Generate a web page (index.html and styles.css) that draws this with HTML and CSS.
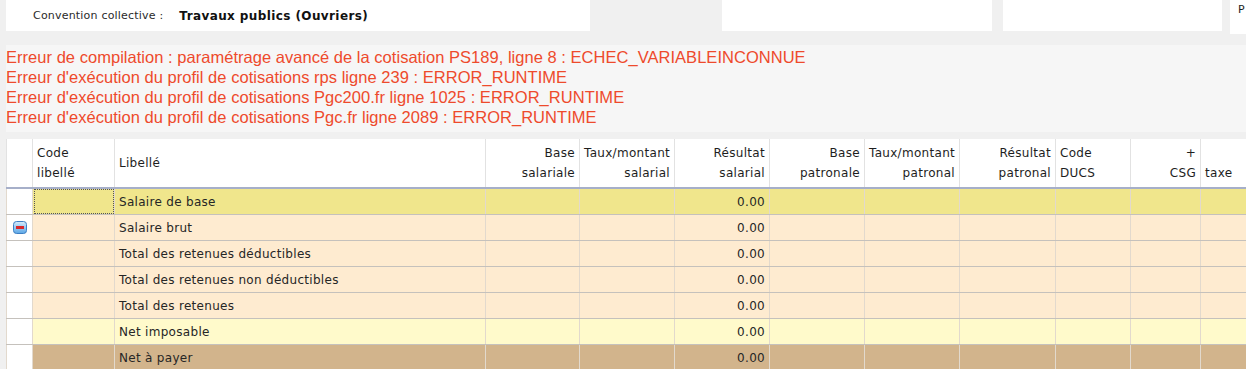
FILE: index.html
```html
<!DOCTYPE html>
<html lang="fr">
<head>
    <meta charset="UTF-8">
    <title>Bulletin - profil de cotisations</title>
    <link rel="stylesheet" href="styles.css">
</head>
<body>
    <div class="top-bar">
        <div class="top-box convention">
            <span class="conv-label">Convention collective :</span>
            <span class="conv-value">Travaux publics (Ouvriers)</span>
        </div>
        <div class="top-box box-mid"></div>
        <div class="top-box box-right"></div>
        <div class="top-box box-last">P</div>
    </div>

    <div class="errors">
        <div>Erreur de compilation : paramétrage avancé de la cotisation PS189, ligne 8 : ECHEC_VARIABLEINCONNUE</div>
        <div>Erreur d'exécution du profil de cotisations rps ligne 239 : ERROR_RUNTIME</div>
        <div>Erreur d'exécution du profil de cotisations Pgc200.fr ligne 1025 : ERROR_RUNTIME</div>
        <div>Erreur d'exécution du profil de cotisations Pgc.fr ligne 2089 : ERROR_RUNTIME</div>
    </div>

    <div class="grid-wrap">
        <table class="grid">
            <colgroup>
                <col style="width:26px">
                <col style="width:82px">
                <col style="width:371px">
                <col style="width:94px">
                <col style="width:95px">
                <col style="width:95px">
                <col style="width:95px">
                <col style="width:95px">
                <col style="width:96px">
                <col style="width:75px">
                <col style="width:70px">
                <col style="width:80px">
            </colgroup>
            <thead>
                <tr>
                    <th></th>
                    <th class="left">Code<br>libellé</th>
                    <th class="left">Libellé</th>
                    <th>Base<br>salariale</th>
                    <th>Taux/montant<br>salarial</th>
                    <th>Résultat<br>salarial</th>
                    <th>Base<br>patronale</th>
                    <th>Taux/montant<br>patronal</th>
                    <th>Résultat<br>patronal</th>
                    <th class="left">Code<br>DUCS</th>
                    <th>+<br>CSG</th>
                    <th class="left">&nbsp;<br>taxe</th>
                </tr>
            </thead>
            <tbody>
                <tr class="row-base">
                    <td class="ind"></td>
                    <td class="focus"></td>
                    <td>Salaire de base</td>
                    <td></td><td></td><td class="num">0.00</td>
                    <td></td><td></td><td></td><td></td><td></td><td></td>
                </tr>
                <tr class="row-total">
                    <td class="ind">
                        <svg class="collapse-icon" width="14" height="13" viewBox="0 0 14 13">
                            <defs>
                                <linearGradient id="blueGrad" x1="0" y1="0" x2="0" y2="1">
                                    <stop offset="0" stop-color="#d6ecfc"/>
                                    <stop offset="1" stop-color="#5aa6e6"/>
                                </linearGradient>
                            </defs>
                            <rect x="0.5" y="0.5" width="13" height="12" rx="3" fill="url(#blueGrad)" stroke="#3d7fc4"/>
                            <rect x="3" y="5" width="8" height="3" fill="#d7262b"/>
                        </svg>
                    </td>
                    <td></td>
                    <td>Salaire brut</td>
                    <td></td><td></td><td class="num">0.00</td>
                    <td></td><td></td><td></td><td></td><td></td><td></td>
                </tr>
                <tr class="row-total">
                    <td class="ind"></td>
                    <td></td>
                    <td>Total des retenues déductibles</td>
                    <td></td><td></td><td class="num">0.00</td>
                    <td></td><td></td><td></td><td></td><td></td><td></td>
                </tr>
                <tr class="row-total">
                    <td class="ind"></td>
                    <td></td>
                    <td>Total des retenues non déductibles</td>
                    <td></td><td></td><td class="num">0.00</td>
                    <td></td><td></td><td></td><td></td><td></td><td></td>
                </tr>
                <tr class="row-total">
                    <td class="ind"></td>
                    <td></td>
                    <td>Total des retenues</td>
                    <td></td><td></td><td class="num">0.00</td>
                    <td></td><td></td><td></td><td></td><td></td><td></td>
                </tr>
                <tr class="row-imposable">
                    <td class="ind"></td>
                    <td></td>
                    <td>Net imposable</td>
                    <td></td><td></td><td class="num">0.00</td>
                    <td></td><td></td><td></td><td></td><td></td><td></td>
                </tr>
                <tr class="row-net">
                    <td class="ind"></td>
                    <td></td>
                    <td>Net à payer</td>
                    <td></td><td></td><td class="num">0.00</td>
                    <td></td><td></td><td></td><td></td><td></td><td></td>
                </tr>
            </tbody>
        </table>
    </div>
</body>
</html>
```

FILE: styles.css
```css
body {
    margin: 0;
    background: #f0f0f0;
    font-family: "DejaVu Sans", Tahoma, sans-serif;
    font-size: 12px;
    letter-spacing: 0.3px;
    color: #1e1e1e;
    overflow: hidden;
}

.top-bar {
    display: flex;
    height: 31px;
}

.top-box {
    background: white;
    height: 31px;
}

.convention {
    margin-left: 6px;
    width: 584px;
    box-sizing: border-box;
    padding-left: 27px;
    display: flex;
    align-items: center;
}

.conv-label {
    font-size: 11px;
    letter-spacing: 0.2px;
    color: #2a2a2a;
}

.conv-value {
    font-weight: bold;
    margin-left: 16px;
    letter-spacing: 0.4px;
    color: #111;
}

.box-mid {
    margin-left: 132px;
    width: 270px;
}

.box-right {
    margin-left: 11px;
    width: 219px;
}

.box-last {
    margin-left: 8px;
    flex: 1;
    padding: 3px 0 0 8px;
    font-size: 11px;
}

.errors {
    margin: 14px 0 0 6px;
    padding: 2px 0 5px;
    background: #f6f6f6;
    font-family: "Liberation Sans", Arial, sans-serif;
    font-size: 16.5px;
    letter-spacing: 0.03px;
    line-height: 20px;
    color: #ee4a2c;
}

.grid-wrap {
    margin-top: 7px;
    margin-left: 6px;
}

.grid {
    table-layout: fixed;
    border-collapse: collapse;
    width: 1274px;
}

.grid th {
    background: white;
    height: 48px;
    padding: 0 4px;
    font-weight: normal;
    line-height: 20px;
    text-align: right;
    white-space: nowrap;
    overflow: hidden;
    border-left: 1px solid #e2e2e2;
    border-bottom: 2px solid #a6afc9;
}

.grid th.left {
    text-align: left;
}

.grid td {
    height: 25px;
    padding: 0 4px;
    border-left: 1px solid #e2d9cd;
    border-bottom: 1px solid #c5c1bc;
    white-space: nowrap;
    color: #262626;
}

.grid td.num {
    text-align: right;
}

.grid td.ind {
    background: white;
    padding: 0;
    text-align: center;
}

.collapse-icon {
    display: block;
    margin: 0 auto;
}

.grid td.focus {
    outline: 1px dotted #555;
    outline-offset: -2px;
}

.row-base td {
    background: #f0e68c;
}

.row-total td {
    background: #feebd0;
}

.row-imposable td {
    background: #fffacb;
}

.row-net td {
    background: #d2b48c;
}
```
